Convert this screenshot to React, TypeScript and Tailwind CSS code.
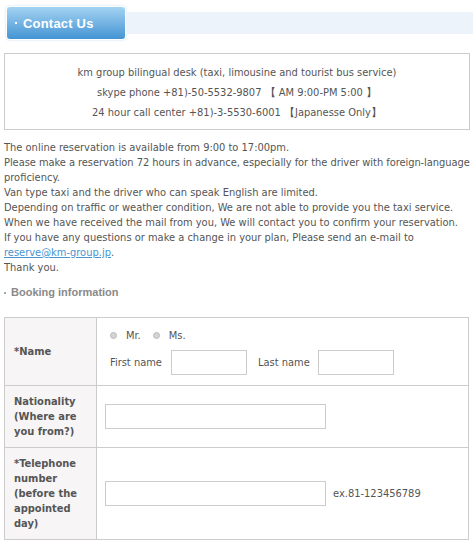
import React from 'react';

const body = "font-['DejaVu_Sans',Tahoma,sans-serif] font-stretch-condensed";

function Radio({ label }: { label: string }) {
  return (
    <label className="flex items-center gap-[9px]">
      <span className="block w-[7px] h-[7px] rounded-full bg-[#d4d4d4] border border-[#bbbbbb]" />
      <span>{label}</span>
    </label>
  );
}

export default function App() {
  return (
    <div className={`w-[474px] min-h-[542px] bg-white text-[11px] leading-[15px] text-[#555] ${body}`}>
      {/* Header tab + light bar */}
      <div className="flex items-center pt-[6px]">
        <div className="ml-[6px] rounded-[4px] bg-white p-px shadow-[0_0_2px_rgba(120,170,220,0.5)]">
          <div className="flex items-center gap-[6px] w-[118px] h-[32px] rounded-[3px] bg-gradient-to-b from-[#a2d3f1] to-[#4394d4] pl-[8px]">
            <span className="block w-[2px] h-[2px] bg-white" />
            <span className="font-['Liberation_Sans',Arial,sans-serif] font-bold text-[13px] tracking-[0.2px] text-white">
              Contact Us
            </span>
          </div>
        </div>
        <div className="flex-1 h-[22px] bg-[#edf3fa] mr-[1px]" />
      </div>

      {/* Contact box */}
      <div className="mx-[4px] mt-[13px] border border-[#cccccc] pt-[9px] pb-[6px] text-center leading-[20px]">
        <p>km group bilingual desk (taxi, limousine and tourist bus service)</p>
        <p>skype phone +81)-50-5532-9807 【 AM 9:00-PM 5:00 】</p>
        <p>24 hour call center +81)-3-5530-6001 【Japanesse Only】</p>
      </div>

      {/* Notes */}
      <div className="px-[4px] mt-[10px]">
        <p>The online reservation is available from 9:00 to 17:00pm.</p>
        <p>
          <span className="whitespace-nowrap tracking-[-0.05px]">
            Please make a reservation 72 hours in advance, especially for the driver with foreign-language
          </span>
          <br />
          proficiency.
        </p>
        <p>Van type taxi and the driver who can speak English are limited.</p>
        <p>Depending on traffic or weather condition, We are not able to provide you the taxi service.</p>
        <p>When we have received the mail from you, We will contact you to confirm your reservation.</p>
        <p>If you have any questions or make a change in your plan, Please send an e-mail to</p>
        <p>
          <a href="#" className="text-[#4a94d0] underline">reserve@km-group.jp</a>.
        </p>
        <p>Thank you.</p>
      </div>

      {/* Section title */}
      <div className="flex items-center gap-[5px] px-[4px] mt-[10px] font-['Liberation_Sans',Arial,sans-serif] font-bold text-[11px] text-[#8a8a8a]">
        <span className="block w-[2px] h-[2px] bg-[#9ab]" />
        <span>Booking information</span>
      </div>

      {/* Form table */}
      <div className="mx-[4px] mt-[17px] mr-[5px] border border-[#cccccc] border-b-0">
        <div className="grid grid-cols-[92px_1fr] border-b border-[#cccccc] h-[68px]">
          <div className="flex items-center bg-[#f7f5f5] border-r border-[#cccccc] pl-[9px] font-bold">*Name</div>
          <div className="flex flex-col pl-[12px] pt-[10px]">
            <div className="flex items-center gap-[12px] pl-[1px]">
              <Radio label="Mr." />
              <Radio label="Ms." />
            </div>
            <div className="flex items-center mt-[7px] pl-[1px]">
              <span>First name</span>
              <input className="ml-[9px] w-[76px] h-[25px] border border-[#cccccc] bg-white outline-none" />
              <span className="ml-[11px]">Last name</span>
              <input className="ml-[8px] w-[76px] h-[25px] border border-[#cccccc] bg-white outline-none" />
            </div>
          </div>
        </div>

        <div className="grid grid-cols-[92px_1fr] border-b border-[#cccccc] h-[62px]">
          <div className="flex items-center bg-[#f7f5f5] border-r border-[#cccccc] pl-[9px] pr-[4px] font-bold">
            Nationality (Where are you from?)
          </div>
          <div className="flex items-center pl-[8px]">
            <input className="w-[221px] h-[25px] border border-[#cccccc] bg-white outline-none" />
          </div>
        </div>

        <div className="grid grid-cols-[92px_1fr] border-b border-[#cccccc] h-[92px]">
          <div className="flex items-center bg-[#f7f5f5] border-r border-[#cccccc] pl-[9px] pr-[4px] font-bold">
            *Telephone number (before the appointed day)
          </div>
          <div className="flex items-center pl-[8px]">
            <input className="w-[221px] h-[25px] border border-[#cccccc] bg-white outline-none" />
            <span className="ml-[7px]">ex.81-123456789</span>
          </div>
        </div>
      </div>
    </div>
  );
}
